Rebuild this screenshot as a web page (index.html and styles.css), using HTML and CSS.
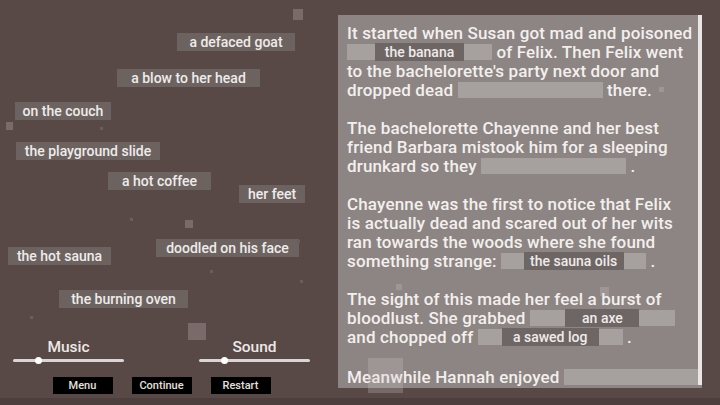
FILE: index.html
```html
<!DOCTYPE html>
<html lang="en">
<head>
  <meta charset="UTF-8" />
  <meta name="viewport" content="width=device-width, initial-scale=1.0"/>
  <title>Story Game</title>
  <link rel="stylesheet" href="styles.css">
</head>
<body>
  <div class="screen">

    <!-- Word board -->
    <div class="board">
      <div class="word" style="left: 177px; top: 33px; width: 118px;">a defaced goat</div>
      <div class="word" style="left: 117px; top: 69px; width: 143px;">a blow to her head</div>
      <div class="word" style="left: 15px; top: 102px; width: 96px;">on the couch</div>
      <div class="word" style="left: 16px; top: 142px; width: 144px;">the playground slide</div>
      <div class="word" style="left: 108px; top: 172px; width: 103px;">a hot coffee</div>
      <div class="word" style="left: 239px; top: 185px; width: 66px;">her feet</div>
      <div class="word" style="left: 156px; top: 239px; width: 143px;">doodled on his face</div>
      <div class="word" style="left: 8px; top: 247px; width: 103px;">the hot sauna</div>
      <div class="word" style="left: 59px; top: 290px; width: 129px;">the burning oven</div>

      <!-- Settings + menu -->
      <div class="controls">
        <div class="sliders">
          <div class="slider">
            <div class="slider-label">Music</div>
            <div class="track"><span class="knob" style="left: 25px;"></span></div>
          </div>
          <div class="slider">
            <div class="slider-label">Sound</div>
            <div class="track"><span class="knob" style="left: 25px;"></span></div>
          </div>
        </div>
        <div class="buttons">
          <button class="menu-btn">Menu</button>
          <button class="menu-btn">Continue</button>
          <button class="menu-btn">Restart</button>
        </div>
      </div>
    </div>

    <!-- Story -->
    <div class="story">
      <div class="story-text">
        <p>It started when Susan got mad and poisoned<br>
        <span class="slot"><span class="slot-word" style="width: 89px;">the banana</span></span> of Felix. Then Felix went<br>
        to the bachelorette's party next door and<br>
        dropped dead <span class="slot"></span> there.</p>

        <p>The bachelorette Chayenne and her best<br>
        friend Barbara mistook him for a sleeping<br>
        drunkard so they <span class="slot"></span> .</p>

        <p>Chayenne was the first to notice that Felix<br>
        is actually dead and scared out of her wits<br>
        ran towards the woods where she found<br>
        something strange: <span class="slot"><span class="slot-word" style="width: 100px;">the sauna oils</span></span> .</p>

        <p>The sight of this made her feel a burst of<br>
        bloodlust. She grabbed <span class="slot"><span class="slot-word" style="width: 74px;">an axe</span></span><br>
        and chopped off <span class="slot"><span class="slot-word" style="width: 97px;">a sawed log</span></span> .</p>

        <p>Meanwhile Hannah enjoyed <span class="slot"></span></p>
      </div>
      <div class="scrollbar"></div>
    </div>

    <!-- Drifting dust -->
    <div class="dust">
      <span class="mote" style="left: 293px; top: 9px; width: 10px; height: 11px;"></span>
      <span class="mote" style="left: 6px; top: 122px; width: 7px; height: 8px;"></span>
      <span class="mote" style="left: 185px; top: 220px; width: 8px; height: 8px;"></span>
      <span class="mote" style="left: 188px; top: 323px; width: 18px; height: 17px;"></span>
      <span class="mote small" style="left: 100px; top: 127px;"></span>
      <span class="mote small" style="left: 297px; top: 240px;"></span>
      <span class="mote small" style="left: 210px; top: 270px;"></span>
      <span class="mote small" style="left: 300px; top: 280px;"></span>
      <span class="mote small" style="left: 30px; top: 316px;"></span>
      <span class="mote small" style="left: 130px; top: 218px;"></span>
      <span class="mote light" style="left: 368px; top: 358px; width: 35px; height: 35px;"></span>
      <span class="mote light" style="left: 600px; top: 287px; width: 9px; height: 9px;"></span>
      <span class="mote light" style="left: 396px; top: 284px; width: 6px; height: 6px;"></span>
      <span class="mote light" style="left: 659px; top: 87px; width: 5px; height: 5px;"></span>
    </div>
  </div>
</body>
</html>
```

FILE: styles.css
```css
body {
  margin: 0;
  background: #584947;
  font-family: Roboto, 'DejaVu Sans', sans-serif;
  font-weight: 500;
  color: #f1edeb;
  overflow: hidden;
}

.screen {
  position: relative;
  width: 720px;
  height: 405px;
  box-sizing: border-box;
  display: flex;
  border-bottom: 7px solid #4c3f3e;
}

/* Word board */
.board {
  position: relative;
  width: 338px;
  display: flex;
  flex-direction: column;
  justify-content: flex-end;
  padding-bottom: 4px;
  box-sizing: border-box;
}

.word {
  position: absolute;
  height: 18px;
  line-height: 18px;
  font-size: 14px;
  text-align: center;
  background: #6c6361;
  color: #efebea;
  white-space: nowrap;
}

.controls {
  width: 297px;
  margin-left: 13px;
  display: flex;
  flex-direction: column;
  align-items: center;
}

.sliders {
  width: 100%;
  display: flex;
  justify-content: space-between;
}

.slider {
  width: 111px;
  display: flex;
  flex-direction: column;
  align-items: center;
}

.slider-label {
  font-size: 15.5px;
  line-height: 18px;
  color: #ece8e6;
}

.track {
  position: relative;
  width: 100%;
  height: 3px;
  margin-top: 3px;
  background: #dad6d5;
  border-radius: 2px;
}

.knob {
  position: absolute;
  top: -2px;
  width: 7px;
  height: 7px;
  margin-left: -3px;
  border-radius: 50%;
  background: #fff;
}

.buttons {
  display: flex;
  gap: 19px;
  margin-top: 15px;
}

.menu-btn {
  width: 60px;
  height: 17px;
  padding: 0;
  border: none;
  background: #000;
  color: #e4e0df;
  font-family: inherit;
  font-weight: 500;
  font-size: 11px;
  line-height: 17px;
}

/* Story panel */
.story {
  width: 364px;
  height: 373px;
  margin-top: 15px;
  background: #8c8583;
  display: flex;
}

.story-text {
  flex: 1;
  overflow: hidden;
  padding: 9px 0 0 9px;
  font-size: 17px;
  line-height: 19px;
  letter-spacing: 0.15px;
  white-space: nowrap;
  color: #f3efed;
}

.story-text p {
  margin: 0 0 19px;
}

.story-text p:last-child {
  margin-top: 21px;
}

.slot {
  display: inline-flex;
  justify-content: center;
  align-items: center;
  vertical-align: top;
  width: 145px;
  height: 16px;
  margin-top: 1px;
  background: #a6a09e;
  letter-spacing: 0;
}

.slot-word {
  flex: none;
  height: 18px;
  line-height: 18px;
  font-size: 14px;
  text-align: center;
  background: #6e6664;
  color: #efebea;
}

.scrollbar {
  width: 4px;
  margin-bottom: 3px;
  background: #e9e6e5;
}

/* Dust particles */
.dust {
  position: absolute;
  inset: 0;
  pointer-events: none;
}

.mote {
  position: absolute;
  background: #786b69;
}

.mote.small {
  width: 3px;
  height: 3px;
  background: #6a5d5b;
}

.mote.light {
  background: rgba(210, 205, 203, 0.25);
}
```
